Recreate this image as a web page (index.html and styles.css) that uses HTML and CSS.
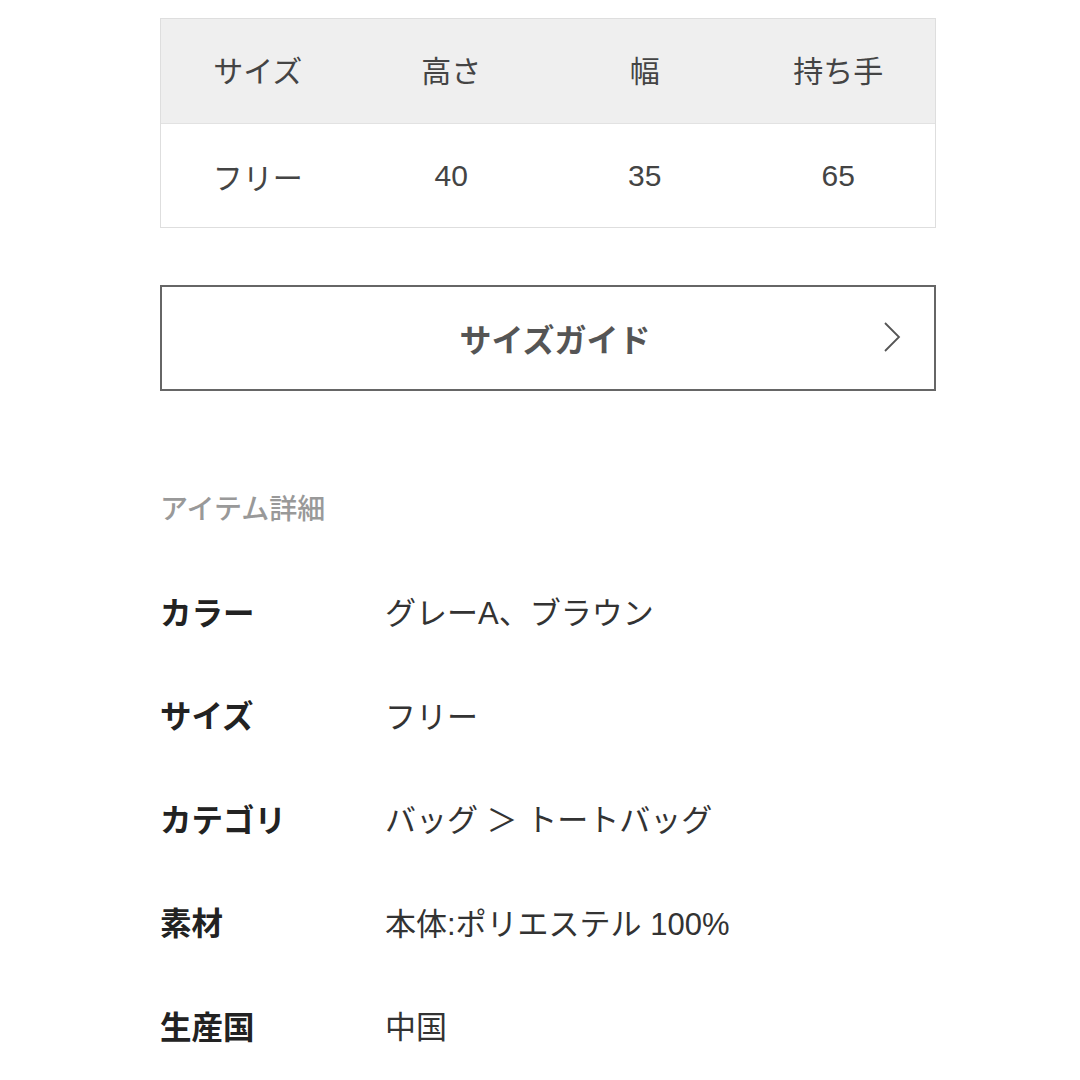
FILE: index.html
```html
<!DOCTYPE html>
<html lang="ja">
<head>
<meta charset="utf-8">
<link rel="stylesheet" href="styles.css">
</head>
<body>
<div class="page">
  <div class="size-table">
    <div class="tr head">
      <div class="td">サイズ</div>
      <div class="td">高さ</div>
      <div class="td">幅</div>
      <div class="td">持ち手</div>
    </div>
    <div class="tr">
      <div class="td">フリー</div>
      <div class="td">40</div>
      <div class="td">35</div>
      <div class="td">65</div>
    </div>
  </div>

  <div class="guide-btn">
    <span class="guide-label">サイズガイド</span>
    <svg class="chev" width="20" height="32" viewBox="0 0 20 32"><path d="M3 2 L17 16 L3 30" fill="none" stroke="#555" stroke-width="1.8"/></svg>
  </div>

  <h2 class="section-title">アイテム詳細</h2>

  <div class="details">
    <div class="row"><div class="label">カラー</div><div class="value">グレーA、ブラウン</div></div>
    <div class="row"><div class="label">サイズ</div><div class="value">フリー</div></div>
    <div class="row"><div class="label">カテゴリ</div><div class="value">バッグ ＞ トートバッグ</div></div>
    <div class="row"><div class="label">素材</div><div class="value">本体:ポリエステル 100%</div></div>
    <div class="row"><div class="label">生産国</div><div class="value">中国</div></div>
  </div>
</div>
</body>
</html>
```

FILE: styles.css
```css
html, body {
  margin: 0;
  padding: 0;
  background: #fff;
}
body {
  font-family: "Liberation Sans", "Noto Sans CJK JP", sans-serif;
  color: #333;
}
.page {
  width: 776px;
  margin-left: 160px;
  padding-top: 18px;
}
.size-table {
  border: 1px solid #dedede;
}
.tr {
  display: grid;
  grid-template-columns: repeat(4, 1fr);
  height: 103px;
  align-items: center;
}
.tr.head {
  background: #efefef;
  border-bottom: 1px solid #e2e2e2;
  height: 100px;
  padding-bottom: 4px;
}
.td {
  text-align: center;
  font-size: 30px;
  color: #444;
}
.guide-btn {
  margin-top: 57px;
  height: 102px;
  border: 2px solid #666;
  display: flex;
  align-items: center;
  justify-content: center;
  padding-left: 14px;
  position: relative;
}
.guide-label {
  font-size: 32px;
  font-weight: 700;
  color: #555;
}
.chev {
  position: absolute;
  right: 32px;
  top: 34px;
}
.section-title {
  margin: 99px 0 0;
  font-size: 28px;
  font-weight: 500;
  line-height: 40px;
  color: #999;
}
.details {
  margin-top: 29px;
}
.row {
  display: flex;
  align-items: center;
  height: 103.5px;
}
.label {
  width: 225px;
  font-size: 31.5px;
  font-weight: 700;
  color: #222;
}
.value {
  font-size: 31px;
  color: #333;
}
```
